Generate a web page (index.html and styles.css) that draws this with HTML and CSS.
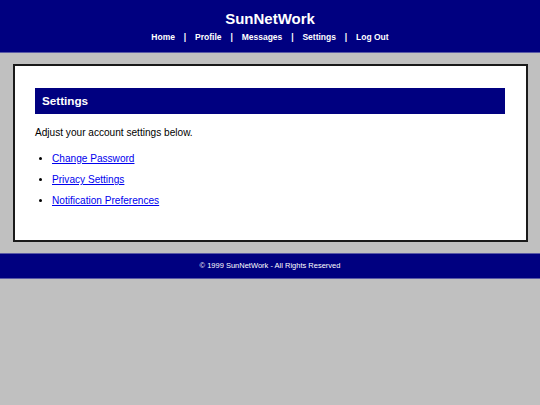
FILE: index.html
```html
<!DOCTYPE html>
<html>
<head>
<meta charset="utf-8">
<title>SunNetWork - Settings</title>
<link rel="stylesheet" href="styles.css">
</head>
<body>
<div class="header">
  <h1 class="site-title">SunNetWork</h1>
  <div class="nav">
    <a href="#">Home</a> | <a href="#">Profile</a> | <a href="#">Messages</a> | <a href="#">Settings</a> | <a href="#">Log Out</a>
  </div>
</div>
<div class="content">
  <h2 class="section-title">Settings</h2>
  <p class="intro">Adjust your account settings below.</p>
  <ul class="settings-list">
    <li><a href="#">Change Password</a></li>
    <li><a href="#">Privacy Settings</a></li>
    <li><a href="#">Notification Preferences</a></li>
  </ul>
</div>
<div class="footer">© 1999 SunNetWork - All Rights Reserved</div>
</body>
</html>
```
FILE: styles.css
```css
html, body {
  margin: 0;
  padding: 0;
}
body {
  background: #c0c0c0;
  font-family: "Liberation Sans", Arial, sans-serif;
  color: #000;
}
.header {
  background: #000080;
  color: #fff;
  text-align: center;
  padding: 10px 0 10px;
  border-bottom: 1px solid #5a5aa6;
}
.site-title {
  margin: 0;
  font-size: 15px;
  line-height: 18px;
  font-weight: bold;
}
.nav {
  margin-top: 4px;
  font-size: 8.5px;
  line-height: 10px;
  font-weight: bold;
  color: #fff;
}
.nav a {
  color: #fff;
  text-decoration: none;
  margin: 0 6.5px;
}
.content {
  background: #fff;
  border: 2px solid #1a1a1a;
  margin: 11px 12px 0 13px;
  padding: 22px 21px 21px 20px;
}
.section-title {
  margin: 0;
  background: #000080;
  color: #fff;
  font-size: 11.7px;
  line-height: 26px;
  height: 26px;
  padding: 0 0 0 7px;
  font-weight: bold;
}
.intro {
  margin: 13px 0 0;
  font-size: 10.1px;
  line-height: 12px;
}
.settings-list {
  margin: 14px 0 12px;
  padding: 0 0 0 17px;
  font-size: 10.1px;
  line-height: 12px;
}
.settings-list li {
  margin-bottom: 9px;
}
.settings-list li:last-child {
  margin-bottom: 0;
}
.settings-list a {
  color: #0000ee;
}
.footer {
  margin-top: 11px;
  background: #000080;
  color: #fff;
  text-align: center;
  font-size: 7.5px;
  line-height: 24px;
  border-top: 1px solid #5a5aa6;
  border-bottom: 1px solid #5a5aa6;
}
```
